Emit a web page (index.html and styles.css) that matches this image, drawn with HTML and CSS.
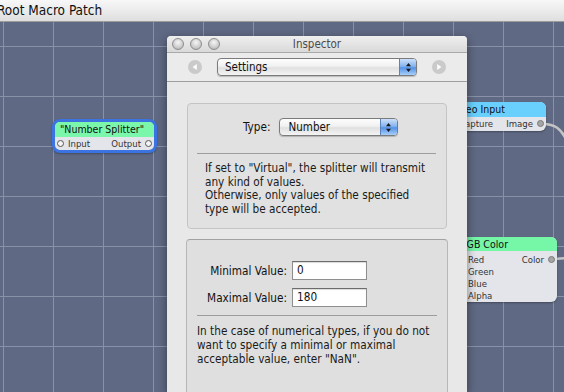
FILE: index.html
```html
<!DOCTYPE html>
<html lang="en">
<head>
  <meta charset="UTF-8">
  <meta name="viewport" content="width=device-width, initial-scale=1.0">
  <title>Root Macro Patch</title>
  <link rel="stylesheet" href="styles.css">
</head>
<body>
  <div class="titlebar">Root Macro Patch</div>

  <div class="canvas">
    <svg class="cables" width="564" height="370">
      <path d="M543 102 C555 102 561 107 566 117" />
      <path d="M554 237 L566 236" />
    </svg>

    <div class="patch splitter">
      <div class="patch-head">"Number Splitter"</div>
      <div class="patch-ports">
        <span class="port"><i class="dot open"></i>Input</span>
        <span class="port">Output<i class="dot open"></i></span>
      </div>
    </div>

    <div class="patch video">
      <div class="patch-head">Video Input</div>
      <div class="patch-ports">
        <span class="port"><i class="dot"></i>Capture</span>
        <span class="port">Image<i class="dot"></i></span>
      </div>
    </div>

    <div class="patch rgb">
      <div class="patch-head">RGB Color</div>
      <div class="patch-ports">
        <div class="port-col">
          <span class="port"><i class="dot"></i>Red</span>
          <span class="port"><i class="dot"></i>Green</span>
          <span class="port"><i class="dot"></i>Blue</span>
          <span class="port"><i class="dot"></i>Alpha</span>
        </div>
        <div class="port-col">
          <span class="port">Color<i class="dot"></i></span>
        </div>
      </div>
    </div>

    <div class="inspector">
      <div class="win-title">
        <div class="lights"><i></i><i></i><i></i></div>
        <span>Inspector</span>
      </div>

      <div class="win-toolbar">
        <svg class="nav" width="14" height="14" viewBox="0 0 14 14">
          <circle cx="7" cy="7" r="7" fill="#cacaca" />
          <path d="M8.8 4 L4.6 7 L8.8 10 Z" fill="#fff" />
        </svg>
        <div class="popup wide">
          <span>Settings</span>
          <b class="arrows">
            <svg width="7" height="11" viewBox="0 0 7 11"><path d="M3.5 1 L6 4.3 H1 Z M3.5 10 L6 6.7 H1 Z" fill="#1a1a1a" /></svg>
          </b>
        </div>
        <svg class="nav" width="14" height="14" viewBox="0 0 14 14">
          <circle cx="7" cy="7" r="7" fill="#cacaca" />
          <path d="M5.2 4 L9.4 7 L5.2 10 Z" fill="#fff" />
        </svg>
      </div>

      <div class="win-body">
        <div class="group">
          <div class="type-row">
            <label>Type:</label>
            <div class="popup type">
              <span>Number</span>
              <b class="arrows">
                <svg width="7" height="11" viewBox="0 0 7 11"><path d="M3.5 1 L6 4.3 H1 Z M3.5 10 L6 6.7 H1 Z" fill="#1a1a1a" /></svg>
              </b>
            </div>
          </div>
          <hr>
          <p class="note">If set to "Virtual", the splitter will transmit<br>any kind of values.<br>Otherwise, only values of the specified<br>type will be accepted.</p>
        </div>

        <div class="group range">
          <div class="fields">
            <label>Minimal Value:</label>
            <div class="field">0</div>
            <label>Maximal Value:</label>
            <div class="field">180</div>
          </div>
          <hr>
          <p class="note">In the case of numerical types, if you do not<br>want to specify a minimal or maximal<br>acceptable value, enter "NaN".</p>
        </div>
      </div>
    </div>
  </div>
</body>
</html>
```

FILE: styles.css
```css
* {
  box-sizing: border-box;
  margin: 0;
  padding: 0;
}
body {
  width: 564px;
  height: 392px;
  overflow: hidden;
  font-family: "DejaVu Sans Condensed", "DejaVu Sans", sans-serif;
  background: #5f6983;
  color: #111;
}
.titlebar {
  height: 22px;
  line-height: 21px;
  font-size: 13.5px;
  text-indent: -3px;
  white-space: nowrap;
  background: linear-gradient(#f7f7f7, #e9e9e9 60%, #dedede);
  border-bottom: 1px solid #9c9c9c;
}
.canvas {
  position: relative;
  height: 370px;
  overflow: hidden;
  background-color: #5f6983;
  background-image:
    linear-gradient(to right, #8891a7 1px, transparent 1px),
    linear-gradient(to bottom, #8891a7 1px, transparent 1px);
  background-size: 50px 50px;
  background-position: 3px 24px;
}
.cables {
  position: absolute;
  left: 0;
  top: 0;
  z-index: 1;
}
.cables path {
  fill: none;
  stroke: #c4c4c4;
  stroke-width: 2.5;
}

/* patches on the canvas */
.patch {
  position: absolute;
  z-index: 2;
  border-radius: 6px;
  overflow: hidden;
  background: #e4e5ea;
  box-shadow: 0 1px 2px rgba(0, 0, 0, 0.3);
}
.patch-head {
  height: 15px;
  line-height: 15px;
  padding-left: 5px;
  font-size: 10.5px;
  white-space: nowrap;
}
.patch-ports {
  display: flex;
  justify-content: space-between;
  padding: 0 2px;
  font-size: 9.5px;
  color: #333;
}
.port-col {
  display: flex;
  flex-direction: column;
  padding-top: 2px;
}
.port {
  display: flex;
  align-items: center;
  gap: 4px;
  height: 13px;
  white-space: nowrap;
}
.port-col .port {
  height: 12.2px;
}
.dot {
  width: 7px;
  height: 7px;
  border-radius: 50%;
  background: #a5a5a5;
  border: 1px solid #7a7a7a;
}
.dot.open {
  background: #f4f4f4;
  border-color: #555;
}
.splitter {
  left: 52px;
  top: 97px;
  width: 105px;
  height: 34px;
  border: 3px solid #3b74e0;
  border-radius: 8px;
}
.splitter .patch-head {
  background: #7af7aa;
}
.video {
  left: 446px;
  top: 80px;
  width: 100px;
  height: 29px;
}
.video .patch-head {
  background: #69d0fd;
}
.rgb {
  left: 455px;
  top: 215px;
  width: 102px;
  height: 65px;
}
.rgb .patch-head {
  background: #76f6a7;
  height: 14px;
  line-height: 14px;
}

/* inspector window */
.inspector {
  position: absolute;
  left: 167px;
  top: 14px;
  bottom: 0;
  width: 300px;
  z-index: 3;
  overflow: hidden;
  background: #e8e8e8;
  border-radius: 4px 4px 0 0;
  box-shadow: 0 3px 10px rgba(0, 0, 0, 0.45);
}
.win-title {
  position: relative;
  height: 17px;
  display: flex;
  align-items: center;
  justify-content: center;
  font-size: 11.5px;
  color: #4b4b4b;
  background: linear-gradient(#efefef, #d9d9d9);
  border-bottom: 1px solid #a9a9a9;
  border-radius: 4px 4px 0 0;
}
.lights {
  position: absolute;
  left: 5px;
  top: 2px;
  display: flex;
  gap: 6px;
}
.lights i {
  width: 12px;
  height: 12px;
  border-radius: 50%;
  border: 1px solid #8d8d8d;
  background: radial-gradient(circle at 50% 35%, #f6f6f6, #cfcfcf 55%, #adadad);
}
.win-toolbar {
  height: 29px;
  display: flex;
  align-items: center;
  justify-content: center;
  gap: 15px;
  background: #ebebeb;
  border-bottom: 1px solid #9f9f9f;
}
.popup {
  display: flex;
  height: 18px;
  font-size: 11.5px;
  border: 1px solid #7b7b7b;
  border-radius: 4px;
  overflow: hidden;
  background: linear-gradient(#fdfdfd, #f1f1f1 45%, #e0e0e0 55%, #f4f4f4);
  box-shadow: 0 1px 1px rgba(0, 0, 0, 0.2);
}
.popup span {
  flex: 1;
  line-height: 16px;
  padding-left: 7px;
}
.popup .arrows {
  width: 17px;
  display: flex;
  align-items: center;
  justify-content: center;
  border-left: 1px solid #5d82bb;
  background: linear-gradient(#cde0fa, #86b4ef 45%, #5592e6 55%, #a7cffa);
}
.popup.wide {
  width: 200px;
}
.popup.type {
  width: 119px;
}
.popup.type span {
  padding-left: 9px;
}

.win-body {
  padding: 21px 0 0 20px;
}
.group {
  width: 260px;
  background: #e1e1e1;
  border: 1px solid #c4c4c4;
  border-radius: 4px;
  padding: 14px 0 12px;
}
.group hr {
  border: 0;
  height: 1px;
  background: #9d9d9d;
  margin: 17px 10px 0 9px;
}
.type-row {
  display: flex;
  align-items: center;
  gap: 8px;
  padding-left: 55px;
  font-size: 11.7px;
}
.note {
  font-size: 11.7px;
  line-height: 13.6px;
  white-space: nowrap;
  color: #1a1a1a;
  margin-top: 8px;
  padding-left: 17px;
}
.group.range {
  width: 262px;
  height: 160px;
  margin: 10px 0 0 -1px;
  padding-top: 21px;
  background: #dfdfdf;
  border-color: #b6b6b6;
  border-top-color: #a2a2a2;
}
.range hr {
  margin: 8px 10px 0 10px;
}
.range .note {
  margin-top: 9px;
  padding-left: 10px;
}
.fields {
  display: grid;
  grid-template-columns: 100px 75px;
  column-gap: 5px;
  row-gap: 8px;
  align-items: center;
  font-size: 11.7px;
}
.fields label {
  text-align: right;
}
.field {
  height: 19px;
  line-height: 17px;
  padding-left: 4px;
  background: #fff;
  border: 1px solid #8e8e8e;
  border-top-color: #6b6b6b;
  box-shadow: inset 0 1px 1px rgba(0, 0, 0, 0.15);
}
```
